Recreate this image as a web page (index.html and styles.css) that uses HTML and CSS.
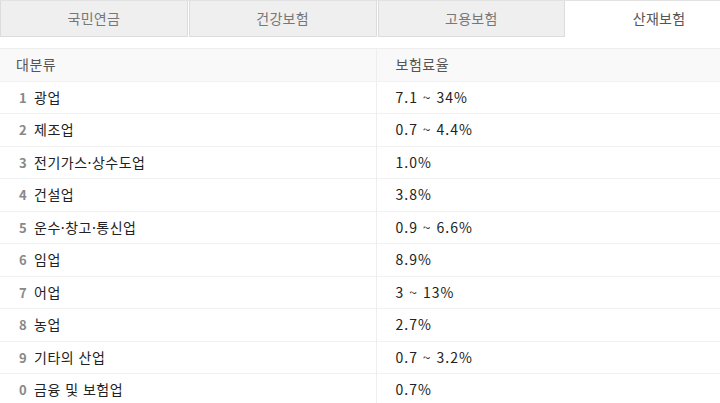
FILE: index.html
```html
<!DOCTYPE html>
<html lang="ko">
<head>
    <meta charset="UTF-8">
    <meta name="viewport" content="width=device-width, initial-scale=1.0">
    <title>산재보험 요율</title>
    <link rel="stylesheet" href="styles.css">
</head>
<body>
    <div class="wrap">
        <ul class="tabs">
            <li class="tab">국민연금</li>
            <li class="tab">건강보험</li>
            <li class="tab">고용보험</li>
            <li class="tab active">산재보험</li>
        </ul>

        <table class="rate-table">
            <thead>
                <tr>
                    <th>대분류</th>
                    <th>보험료율</th>
                </tr>
            </thead>
            <tbody>
                <tr><td><span class="num">1</span>광업</td><td>7.1 ~ 34%</td></tr>
                <tr><td><span class="num">2</span>제조업</td><td>0.7 ~ 4.4%</td></tr>
                <tr><td><span class="num">3</span>전기가스·상수도업</td><td>1.0%</td></tr>
                <tr><td><span class="num">4</span>건설업</td><td>3.8%</td></tr>
                <tr><td><span class="num">5</span>운수·창고·통신업</td><td>0.9 ~ 6.6%</td></tr>
                <tr><td><span class="num">6</span>임업</td><td>8.9%</td></tr>
                <tr><td><span class="num">7</span>어업</td><td>3 ~ 13%</td></tr>
                <tr><td><span class="num">8</span>농업</td><td>2.7%</td></tr>
                <tr><td><span class="num">9</span>기타의 산업</td><td>0.7 ~ 3.2%</td></tr>
                <tr><td><span class="num">0</span>금융 및 보험업</td><td>0.7%</td></tr>
            </tbody>
        </table>
    </div>
</body>
</html>
```

FILE: styles.css
```css
html, body { margin: 0; padding: 0; overflow: hidden; background: #fff; }
body { font-family: "Noto Sans CJK KR", "Noto Sans", sans-serif; color: #222; font-size: 14px; }
.wrap { width: 752px; }
.tabs { display: flex; margin: 0; padding: 0; list-style: none; border-top: 1px solid #e2e2e2; }
.tab { flex: 1; height: 35px; line-height: 35px; text-align: center; color: #777; background: #efefef; border: 1px solid #dcdcdc; border-top: 0; font-size: 14px; letter-spacing: 0.3px; }
.tab + .tab { margin-left: 1px; }
.tab.active { background: #fff; color: #555; border: 0; }
.rate-table { width: 100%; border-collapse: collapse; margin-top: 11px; table-layout: fixed; }
.rate-table th, .rate-table td { text-align: left; padding: 5px 0 5px 16px; line-height: 21.5px; border-top: 1px solid #eee; letter-spacing: 0.5px; }
.rate-table th { background: #f9f9f9; color: #555; font-weight: normal; }
.rate-table th + th, .rate-table td + td { border-left: 1px solid #eee; padding-left: 19px; }
.rate-table td { border-top-color: #f1f1f1; }
.rate-table td + td { letter-spacing: 1px; }
.num { display: inline-block; width: 15px; padding-left: 3px; color: #888; font-weight: bold; font-size: 13px; letter-spacing: 0; }
```
